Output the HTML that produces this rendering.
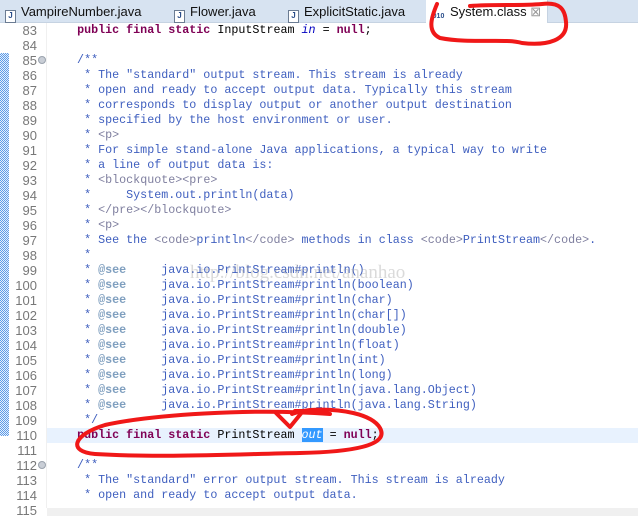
<!DOCTYPE html>
<html><head><meta charset="utf-8"><style>
body{margin:0;width:638px;height:516px;overflow:hidden;background:#fff;position:relative;font-family:"Liberation Mono",monospace;}
#tabs{position:absolute;left:0;top:0;width:638px;height:22px;background:#d7e3f1;border-bottom:1px solid #c6d3e2;font-family:"Liberation Sans",sans-serif;font-size:13px;color:#111;}
.tab{position:absolute;top:3px;height:19px;line-height:17px;}
.ic{display:inline-block;width:9px;height:11px;border:1px solid #6b7c93;background:#fff;vertical-align:-2px;margin-right:5px;font-size:8px;line-height:10px;text-align:center;color:#2a4d8a;font-weight:bold}
#active{position:absolute;left:426px;top:0;width:121px;height:23px;background:#fff;border-right:1px solid #c6d3e2;}
#strip{position:absolute;left:0;top:53px;width:9px;height:383px;background-image:linear-gradient(45deg,#5c9be8 25%,transparent 25%,transparent 75%,#5c9be8 75%),linear-gradient(45deg,#5c9be8 25%,transparent 25%,transparent 75%,#5c9be8 75%);background-size:2px 2px;background-position:0 0,1px 1px;background-color:#e6effb;}
#gut{position:absolute;left:46px;top:23px;width:1px;height:485px;background:#f0f0f0;}
#hl{position:absolute;left:47px;top:428px;width:591px;height:15px;background:#e8f2fe;}
.ln{position:absolute;left:0;width:37px;text-align:right;font-size:13px;color:#787878;font-family:"Liberation Sans",sans-serif;}
.c{position:absolute;left:49px;white-space:pre;font-size:11.7px;color:#3f5fbf;}
.k{color:#7f0055;font-weight:bold}
.n{color:#000}
.t{color:#7f7f9f}
.s{color:#7f9fbf;font-weight:bold}
.fold{position:absolute;left:38px;width:8px;height:8px;border-radius:50%;background:#c9ced6;border:1px solid #9aa2ad;box-sizing:border-box}
#scroll{position:absolute;left:47px;top:508px;width:591px;height:8px;background:#f0f0f0;}
</style></head><body>
<div id="tabs">
<div id="active"></div>
<div class="tab" style="left:5px"><span class="ic">J</span>VampireNumber.java</div>
<div class="tab" style="left:174px"><span class="ic">J</span>Flower.java</div>
<div class="tab" style="left:288px"><span class="ic">J</span>ExplicitStatic.java</div>
<div class="tab" style="left:432px"><span class="ic" style="border:none;background:none;width:13px;font-size:7px">010</span>System.class <span style="color:#999">⊠</span></div>
</div>
<div id="strip"></div>
<div id="gut"></div>
<div id="hl"></div>
<div id="scroll"></div>
<div id="lines"></div>
<script>
var L=[
'    <span class="k">public final static</span> <span class="n">InputStream</span> <i class="n" style="color:#0000c0">in</i> <span class="n">=</span> <span class="k">null</span><span class="n">;</span>',
'',
'    /**',
'     * The "standard" output stream. This stream is already',
'     * open and ready to accept output data. Typically this stream',
'     * corresponds to display output or another output destination',
'     * specified by the host environment or user.',
'     * <span class="t">&lt;p&gt;</span>',
'     * For simple stand-alone Java applications, a typical way to write',
'     * a line of output data is:',
'     * <span class="t">&lt;blockquote&gt;&lt;pre&gt;</span>',
'     *     System.out.println(data)',
'     * <span class="t">&lt;/pre&gt;&lt;/blockquote&gt;</span>',
'     * <span class="t">&lt;p&gt;</span>',
'     * See the <span class="t">&lt;code&gt;</span>println<span class="t">&lt;/code&gt;</span> methods in class <span class="t">&lt;code&gt;</span>PrintStream<span class="t">&lt;/code&gt;</span>.',
'     *'];
var sees=['println()','println(boolean)','println(char)','println(char[])','println(double)','println(float)','println(int)','println(long)','println(java.lang.Object)','println(java.lang.String)'];
sees.forEach(function(s){L.push('     * <span class="s">@see</span>     java.io.PrintStream#'+s);});
L.push('     */');
L.push('    <span class="k">public final static</span> <span class="n">PrintStream</span> <i style="color:#fff;background:#3399ff">out</i> <span class="n">=</span> <span class="k">null</span><span class="n">;</span>');
L.push('');
L.push('    /**');
L.push('     * The "standard" error output stream. This stream is already');
L.push('     * open and ready to accept output data.');
var h='';
for(var i=0;i<L.length;i++){var y=23+i*15;
h+='<div class="ln" style="top:'+(y+0)+'px;line-height:15px">'+(83+i)+'</div>';
h+='<div class="c" style="top:'+y+'px;line-height:15px">'+L[i]+'</div>';}
h+='<div class="ln" style="top:'+(23+32*15)+'px;line-height:15px">115</div>';
h+='<div class="fold" style="top:56px"></div><div class="fold" style="top:461px"></div>';
document.getElementById('lines').innerHTML=h;
</script>
<div style="position:absolute;left:190px;top:262px;font-family:'Liberation Serif',serif;font-size:19px;color:rgba(150,150,150,0.35)">http://blog.csdn.net/ananhao</div>
<svg width="638" height="516" style="position:absolute;left:0;top:0">
<g fill="none" stroke="#f01818" stroke-width="4" stroke-linecap="round" stroke-linejoin="round">
<path d="M437 4 C 431 18, 427 32, 440 38 C 470 44, 505 38, 522 43 C 548 46, 568 40, 566 22 C 565 9, 560 2, 542 4 C 520 6, 495 4, 470 6"/>
<path d="M330 414 C 250 408, 150 415, 105 425 C 72 435, 68 452, 95 454 C 160 458, 240 454, 300 453 C 350 452, 390 446, 380 428 C 372 414, 340 408, 310 410 C 300 411, 295 413, 292 414"/>
<path d="M276 413 L 290 427 L 303 411"/>
<path d="M295 411 L 322 411"/>
</g></svg>
</body></html>
